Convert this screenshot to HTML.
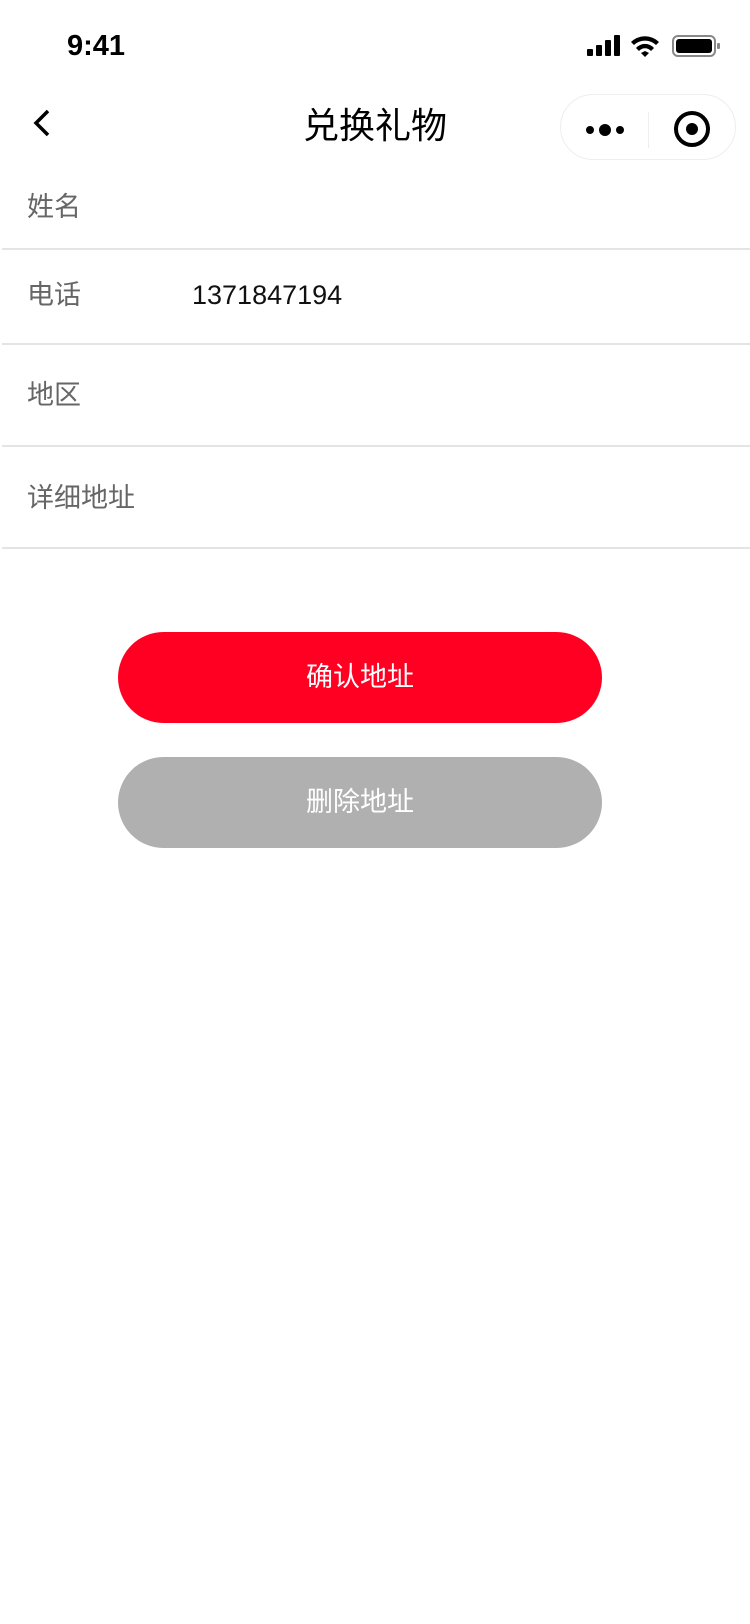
<!DOCTYPE html>
<html><head><meta charset="utf-8"><style>
*{margin:0;padding:0;box-sizing:border-box}
body{width:750px;height:1624px;background:#fff;position:relative;overflow:hidden;font-family:"Liberation Sans","Noto Sans CJK SC",sans-serif}
.a{position:absolute}
.lbl{position:absolute;left:27px;font-size:27px;color:#666;line-height:32px}
.div{position:absolute;left:2px;right:0;height:2px;background:#e4e4e4}
.btn{position:absolute;left:118px;width:484px;height:91px;border-radius:46px;color:#fff;font-size:27px;text-align:center;line-height:91px}
</style></head><body>
<div class="a" style="left:67px;top:30px;font-size:29px;font-weight:bold;color:#000">9:41</div>
<svg class="a" style="left:585px;top:33px" width="140" height="26" viewBox="0 0 140 26">
<rect x="2" y="16" width="6" height="7" rx="1"/><rect x="11" y="12" width="6" height="11" rx="1"/><rect x="20" y="7" width="6" height="16" rx="1"/><rect x="29" y="2" width="6" height="21" rx="1"/>
<path d="M46 9a20 20 0 0 1 28 0l-3 3a16 16 0 0 0-22 0z"/><path d="M51 15a12 12 0 0 1 18 0l-3 3a8 8 0 0 0-12 0z"/><path d="M56 20l4-2 4 2-4 4z"/>
<rect x="88" y="3" width="42" height="20" rx="5" fill="none" stroke="#888" stroke-width="2"/><rect x="91" y="6" width="36" height="14" rx="3"/><rect x="132" y="10" width="3" height="6" rx="1" fill="#888"/>
</svg>
<svg class="a" style="left:30px;top:108px" width="24" height="32" viewBox="0 0 24 32"><path d="M18 3L6 15l12 12" fill="none" stroke="#000" stroke-width="3.5"/></svg>
<div class="a" style="left:0;width:750px;top:104px;text-align:center;font-size:36px;color:#000;line-height:44px">兑换礼物</div>
<div class="a" style="left:560px;top:94px;width:176px;height:66px;border:1px solid #eee;border-radius:33px;background:#fff"></div>
<div class="a" style="left:648px;top:112px;width:1px;height:36px;background:#eee"></div>
<svg class="a" style="left:585px;top:116px" width="44" height="28" viewBox="0 0 44 28"><circle cx="5" cy="14" r="4"/><circle cx="20" cy="14" r="6"/><circle cx="35" cy="14" r="4"/></svg>
<svg class="a" style="left:672px;top:109px" width="40" height="40" viewBox="0 0 40 40"><circle cx="20" cy="20" r="16" fill="none" stroke="#000" stroke-width="4"/><circle cx="20" cy="20" r="6"/></svg>
<div class="lbl" style="top:191px">姓名</div>
<div class="div" style="top:248px"></div>
<div class="lbl" style="top:279px">电话</div>
<div class="a" style="left:192px;top:279px;font-size:27px;color:#111;line-height:32px">1371847194</div>
<div class="div" style="top:343px"></div>
<div class="lbl" style="top:379px">地区</div>
<div class="div" style="top:445px"></div>
<div class="lbl" style="top:482px">详细地址</div>
<div class="div" style="top:547px"></div>
<div class="btn" style="top:632px;background:#ff0022">确认地址</div>
<div class="btn" style="top:757px;background:#b0b0b0">删除地址</div>
</body></html>
